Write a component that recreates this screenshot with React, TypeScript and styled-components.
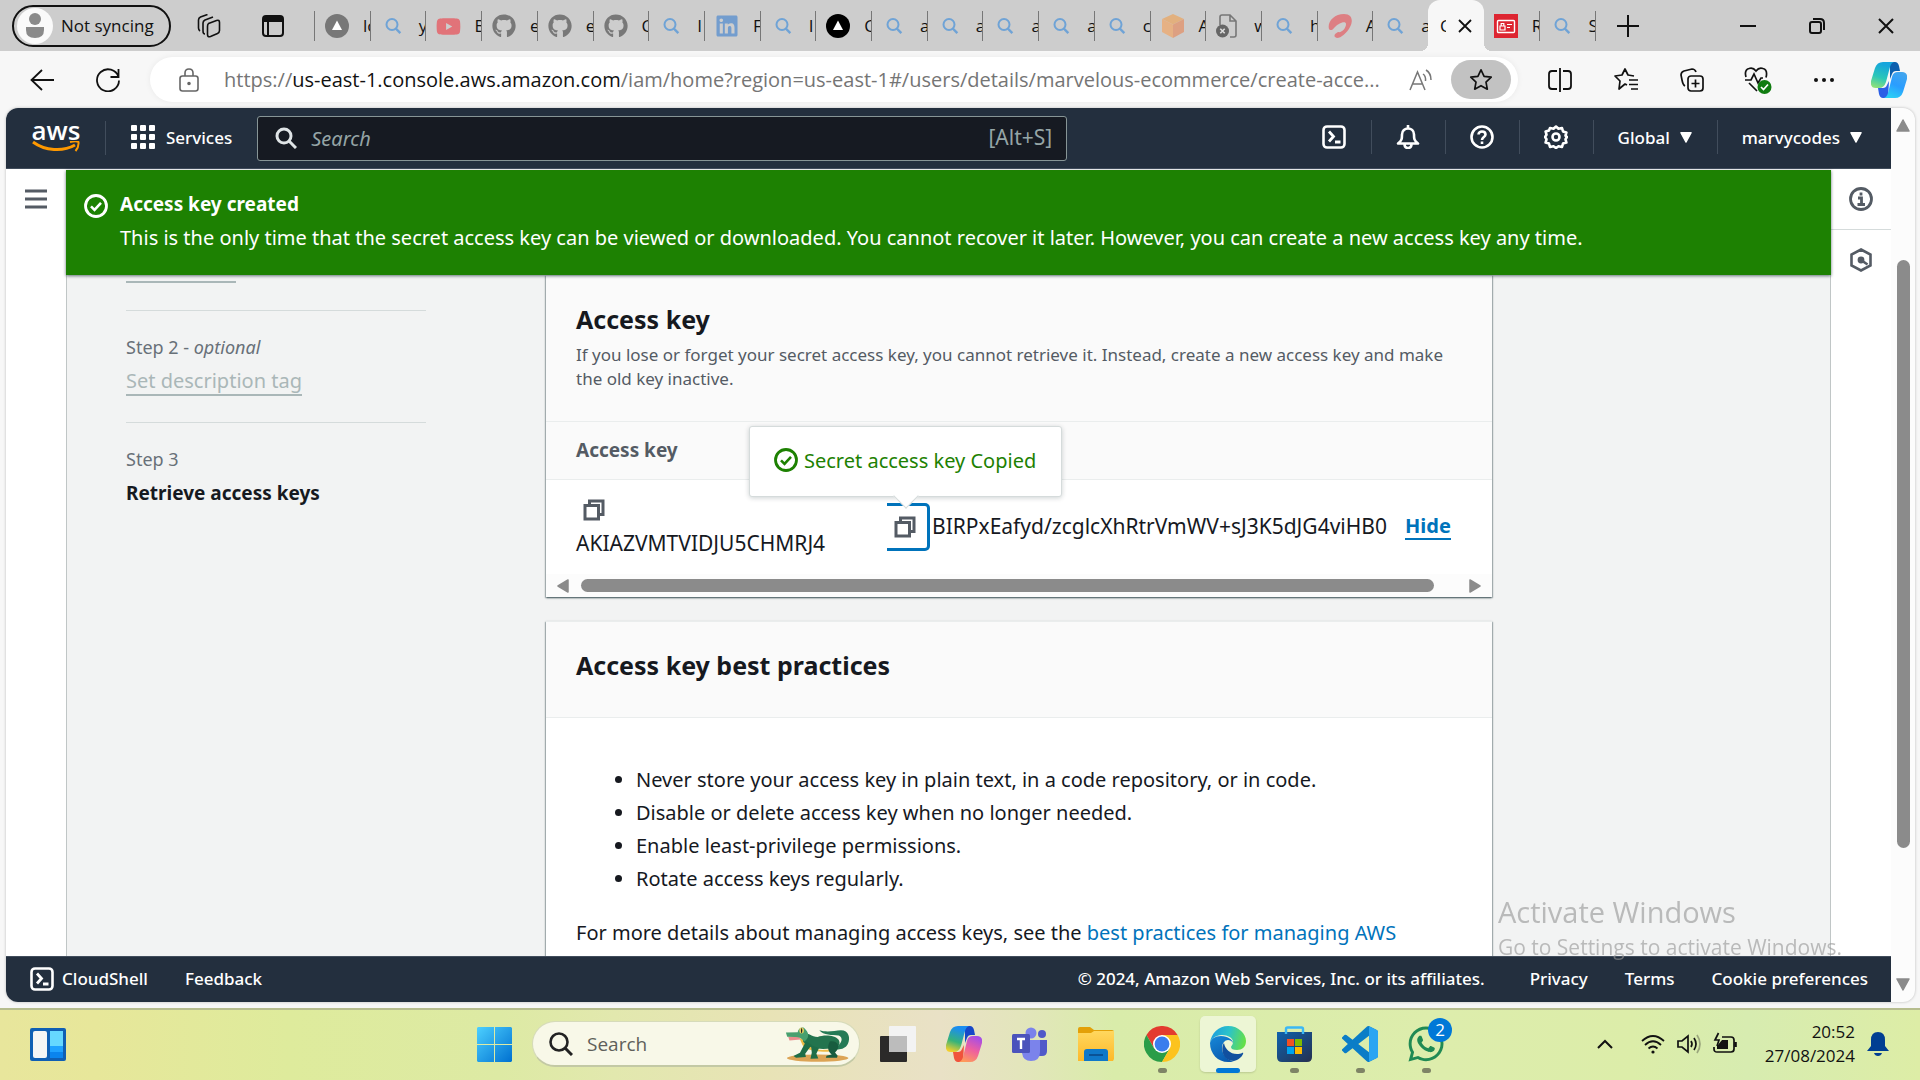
import React from 'react';
import styled, { createGlobalStyle, css } from 'styled-components';
import { FaGithub, FaYoutube, FaLinkedin, FaWhatsapp } from 'react-icons/fa';

const UI = '"Open Sans", "Noto Sans", sans-serif';
const EMBER = '"Noto Sans", "Open Sans", sans-serif';

const Global = createGlobalStyle`
  *, *::before, *::after { box-sizing: border-box; }
  body { margin: 0; background: #f7f7f7; }
  button { font: inherit; color: inherit; background: none; border: 0; padding: 0; cursor: pointer; }
  input { font: inherit; color: inherit; background: none; border: 0; padding: 0; outline: 0; min-width: 0; }
  h1, h2, p, ul, ol { margin: 0; padding: 0; }
  a { text-decoration: none; }
  svg { display: block; flex: none; }
`;

const Screen = styled.div`
  display: flex;
  flex-direction: column;
  height: 100vh;
  overflow: hidden;
  font-family: ${UI};
  color: #111;
`;

/* ---------- browser tab strip ---------- */

const TabStrip = styled.header`
  display: flex;
  align-items: center;
  height: 51px;
  background: #cdcdcd;
  font-size: 17px;
`;
const StripStart = styled.div`
  display: flex;
  align-items: center;
  width: 314px;
  padding-left: 12px;
`;
const Profile = styled.button`
  display: flex;
  align-items: center;
  gap: 8px;
  width: 159px;
  height: 42px;
  padding: 0 0 0 3px;
  border: 2px solid #111;
  border-radius: 21px;
  white-space: nowrap;
`;
const Avatar = styled.span`
  display: grid;
  place-items: center;
  width: 36px;
  height: 36px;
  border-radius: 50%;
  background: #fafafa;
`;
const StripIcon = styled.button`
  display: grid;
  place-items: center;
  width: 64px;
  height: 42px;
`;
const StripTools = styled.div`
  display: flex;
  margin-left: 6px;
`;
const Tabs = styled.nav`
  display: flex;
  flex: 1;
  min-width: 0;
  height: 100%;
`;
const Rule = styled.i`
  flex: none;
  align-self: center;
  width: 1px;
  height: 30px;
  background: #777;
`;
const TabItem = styled.button`
  display: flex;
  align-items: center;
  flex: 1 1 0;
  min-width: 0;
  height: 100%;
  text-align: left;
`;
const TabFace = styled.span`
  display: flex;
  align-items: center;
  gap: 14px;
  flex: 1;
  min-width: 0;
  padding-left: 10px;
  overflow: hidden;
  white-space: nowrap;
`;
const Favicon = styled.span<{ $dim?: boolean }>`
  display: grid;
  place-items: center;
  flex: none;
  width: 24px;
  height: 24px;
  opacity: ${p => (p.$dim ? 0.55 : 1)};
`;
const ActiveTab = styled(TabItem)`
  position: relative;
  justify-content: center;
  gap: 12px;
  background: #f7f7f7;
  border-radius: 12px 12px 0 0;
  &::before, &::after {
    content: '';
    position: absolute;
    bottom: 0;
    width: 8px;
    height: 8px;
  }
  &::before { right: 100%; background: radial-gradient(circle at 0 0, transparent 8px, #f7f7f7 8px); }
  &::after { left: 100%; background: radial-gradient(circle at 100% 0, transparent 8px, #f7f7f7 8px); }
`;
const ClippedTitle = styled.span`
  width: 6px;
  overflow: hidden;
`;
const StripEnd = styled.div`
  display: flex;
  justify-content: space-between;
  width: 324px;
`;
const WindowControls = styled.div`
  display: flex;
`;
const WindowButton = styled.button<{ $narrow?: boolean }>`
  display: grid;
  place-items: center;
  width: ${p => (p.$narrow ? 64 : 69)}px;
  height: 51px;
`;

/* ---------- browser toolbar ---------- */

const Toolbar = styled.div`
  display: flex;
  align-items: center;
  height: 57px;
  padding-left: 9px;
  background: #f7f7f7;
`;
const ToolButton = styled.button`
  display: grid;
  place-items: center;
  flex: none;
  width: 66px;
  height: 45px;
`;
const AddressBar = styled.div`
  display: flex;
  align-items: center;
  flex: 1;
  min-width: 0;
  height: 45px;
  margin: 0 9px;
  padding: 0 7px 0 27px;
  border-radius: 23px;
  background: #fff;
  box-shadow: 0 0 6px rgba(0, 0, 0, 0.06);
`;
const Url = styled.div`
  flex: 1;
  min-width: 0;
  margin-left: 23px;
  overflow: hidden;
  font-size: 20px;
  line-height: 28px;
  white-space: nowrap;
  color: #757575;
  strong { font-weight: 400; color: #111; }
`;
const StarButton = styled.button`
  display: grid;
  place-items: center;
  width: 60px;
  height: 39px;
  margin-left: 18px;
  border-radius: 20px;
  background: #c2c2c2;
`;
const ToolGroup = styled.div`
  display: flex;
  ${ToolButton}:last-child { width: 63px; }
`;

/* ---------- page frame ---------- */

const Frame = styled.div`
  display: flex;
  flex: 1;
  min-height: 0;
  margin: 0 5px 6px 6px;
  border-radius: 12px;
  overflow: hidden;
  background: #fcfcfc;
  box-shadow: 0 0 3px rgba(0, 0, 0, 0.25);
  font-family: ${EMBER};
`;
const Page = styled.div`
  display: flex;
  flex-direction: column;
  flex: 1;
  min-width: 0;
`;
const PageScroll = styled.div`
  display: flex;
  flex-direction: column;
  align-items: center;
  width: 24px;
  padding: 11px 0;
`;
const PageThumb = styled.div`
  width: 13px;
  margin: 127px 0 auto;
  flex: 0 1 588px;
  border-radius: 7px;
  background: #8b8b8b;
`;

const AwsBar = styled.header`
  display: flex;
  align-items: center;
  height: 61px;
  padding-left: 26px;
  background: #232f3e;
  border-bottom: 1px solid #414d5c;
  color: #fff;
  font-size: 17px;
  font-weight: 500;
`;
const Logo = styled.a`
  display: flex;
  flex-direction: column;
  align-items: center;
  width: 48px;
  padding-bottom: 3px;
  color: #fff;
  font: 600 26px/22px ${UI};
`;
const BarRule = styled.i`
  width: 1px;
  height: 34px;
  margin: 0 25px;
  background: #414d5c;
`;
const ServicesButton = styled.button`
  display: flex;
  align-items: center;
  gap: 11px;
  padding-bottom: 2px;
`;
const AwsSearch = styled.label`
  display: flex;
  align-items: center;
  flex: 0 1 810px;
  height: 45px;
  margin-left: 25px;
  padding: 0 14px 0 17px;
  border: 1px solid #879596;
  border-radius: 3px;
  background: #161a22;
  color: #95a5a6;
  font-size: 20px;
  font-weight: 400;
  input { flex: 1; margin-left: 14px; font-style: italic; }
  input::placeholder { color: #95a5a6; opacity: 1; }
`;
const Shortcut = styled.span`
  font-size: 21px;
  line-height: 28px;
  padding-bottom: 2px;
`;
const BarEnd = styled.div`
  display: flex;
  margin-left: auto;
  padding: 0 4px 2px 0;
`;
const BarItem = styled.button<{ $first?: boolean }>`
  display: flex;
  align-items: center;
  gap: 10px;
  height: 34px;
  padding: 0 25px 0 24px;
  border-left: 1px solid ${p => (p.$first ? 'transparent' : '#414d5c')};
`;
const Body = styled.div`
  display: flex;
  flex: 1;
  min-height: 0;
`;
const SideRail = styled.aside`
  display: flex;
  flex-direction: column;
  flex: none;
  width: 60px;
  background: #fff;
`;
const RailButton = styled.button<{ $ruled?: boolean }>`
  display: grid;
  place-items: center;
  height: 61px;
  border-bottom: 1px solid ${p => (p.$ruled ? '#d5dbdb' : 'transparent')};
`;
const Main = styled.main`
  display: flex;
  flex-direction: column;
  flex: 1;
  min-width: 0;
  padding-top: 1px;
  color: #16191f;
  font-size: 20px;
  line-height: 33px;
`;
const Flash = styled.section`
  position: relative;
  z-index: 1;
  display: flex;
  gap: 12px;
  padding: 18px 18px 21px;
  background: #1d8102;
  color: #fff;
  box-shadow: 0 1px 3px rgba(0, 28, 36, 0.6);
  svg { margin-top: 6px; }
`;
const FlashTitle = styled.h1`
  font-size: 19px;
  line-height: 33px;
  font-weight: 700;
`;
const Content = styled.div`
  display: grid;
  grid-template-columns: 300px minmax(0, 946px);
  align-items: start;
  column-gap: 120px;
  flex: 1;
  min-height: 0;
  padding-left: 59px;
  overflow: hidden;
  background: #f2f3f3;
  border: solid #c0c6c6;
  border-width: 0 1px;
`;
const Steps = styled.ol`
  list-style: none;
  margin-top: -20px;
`;
const Step = styled.li`
  display: flex;
  flex-direction: column;
  align-items: flex-start;
  gap: 9px;
  padding-bottom: 27px;
  & + & { padding-top: 24px; padding-bottom: 26px; border-top: 1px solid #d5dbdb; }
`;
const StepLabel = styled.span`
  font-size: 18px;
  line-height: 24px;
  color: #687078;
`;
const StepLink = styled.a`
  line-height: 26px;
  color: #aab7b8;
  border-bottom: 2px solid #aab7b8;
`;
const StepCurrent = styled.span`
  font-size: 19px;
  line-height: 26px;
  font-weight: 700;
`;
const Cards = styled.div`
  display: flex;
  flex-direction: column;
  gap: 24px;
`;
const Card = styled.section`
  border-top: 1px solid #eaeded;
  background: #fff;
  box-shadow: 0 1px 2px rgba(0, 28, 36, 0.5), 1px 1px 1px rgba(0, 28, 36, 0.2), -1px 1px 1px rgba(0, 28, 36, 0.2);
`;
const CardHeader = styled.div<{ $described?: boolean }>`
  padding: 25px 30px ${p => (p.$described ? 30 : 34)}px;
  background: #fafafa;
  border-bottom: 1px solid #eaeded;
`;
const CardTitle = styled.h2`
  font-size: 25px;
  line-height: 36px;
  font-weight: 700;
`;
const CardText = styled.p`
  margin-top: 6px;
  font-size: 17px;
  line-height: 24px;
  color: #545b64;
`;
const KeyTable = styled.table`
  width: 100%;
  border-collapse: collapse;
  table-layout: fixed;
  th {
    height: 57px;
    padding: 0 0 0 30px;
    background: #fafafa;
    border-bottom: 1px solid #eaeded;
    color: #545b64;
    font-size: 19px;
    text-align: left;
  }
  th:first-child { width: 341px; }
  td { height: 95px; padding: 0 0 0 30px; vertical-align: middle; }
  td + td { padding-left: 0; }
`;
const KeyCell = styled.div`
  display: flex;
  flex-direction: column;
  align-items: flex-start;
  font-size: 21px;
`;
const SecretCell = styled.div`
  display: flex;
  align-items: center;
  font-size: 21px;
`;
const CopyButton = styled.button<{ $focused?: boolean }>`
  display: flex;
  align-items: center;
  height: 33px;
  padding: 0 7px;
  ${p => p.$focused && css`
    width: 43px;
    height: 48px;
    border: solid #0073bb;
    border-width: 3px 3px 3px 0;
    border-radius: 0 5px 5px 0;
  `}
`;
const CopyAnchor = styled.span`
  position: relative;
  margin-right: 2px;
`;
const Popover = styled.span`
  position: absolute;
  bottom: calc(100% + 6px);
  left: -138px;
  z-index: 2;
  display: flex;
  align-items: center;
  gap: 6px;
  height: 71px;
  padding: 0 25px 2px 24px;
  border: 1px solid #d5dbdb;
  border-radius: 3px;
  background: #fff;
  box-shadow: 0 1px 5px rgba(0, 28, 36, 0.2);
  color: #1d8102;
  font-size: 20px;
  white-space: nowrap;
  &::after {
    content: '';
    position: absolute;
    top: 100%;
    left: 147px;
    width: 18px;
    height: 18px;
    margin-top: -9px;
    background: #fff;
    border: solid #d5dbdb;
    border-width: 0 1px 1px 0;
    transform: rotate(45deg);
  }
`;
const HideButton = styled.button`
  margin-left: 18px;
  font-size: 20px;
  line-height: 24px;
  font-weight: 700;
  color: #0073bb;
  border-bottom: 2px solid #0073bb;
`;
const TableScroll = styled.div`
  display: flex;
  align-items: center;
  gap: 10px;
  height: 23px;
  padding: 0 11px;
  background: #fcfcfc;
`;
const TableThumb = styled.div`
  flex: 1;
  height: 13px;
  margin-right: 23px;
  border-radius: 7px;
  background: #8b8b8b;
`;
const Practices = styled.div`
  padding: 45px 30px 24px;
  ul { padding-left: 60px; margin-bottom: 21px; }
  a { color: #0073bb; }
`;
const AwsFooter = styled.footer`
  display: flex;
  align-items: center;
  height: 46px;
  padding: 0 23px 2px 24px;
  gap: 37px;
  background: #232f3e;
  border-top: 1px solid #414d5c;
  color: #fff;
  font-size: 17px;
  font-weight: 500;
  a { color: #fff; }
`;
const ShellButton = styled.button`
  display: flex;
  align-items: center;
  gap: 8px;
`;
const Legal = styled.span`
  margin-left: auto;
  margin-right: 8px;
`;

/* ---------- windows watermark ---------- */

const Watermark = styled.div`
  position: fixed;
  right: 78px;
  bottom: 118px;
  z-index: 5;
  color: rgba(150, 150, 150, 0.62);
  font-size: 21px;
  line-height: 30px;
  pointer-events: none;
  strong { display: block; font-size: 29px; line-height: 40px; font-weight: 400; }
`;

/* ---------- taskbar ---------- */

const Taskbar = styled.footer`
  display: grid;
  grid-template-columns: 1fr auto 1fr;
  align-items: center;
  height: 72px;
  padding-bottom: 2px;
  border-top: 2px solid #b6bd8e;
  background: linear-gradient(90deg, #e8e69c 0, #e7e79a 5%, #deeb9c 15%, #ddeaa4 26%, #e2e8ae 32%, #e8e3b6 40%, #e9e1c6 49%, #e3e5bc 53%, #d9ecaa 58%, #ddedac 75%, #dceda9 85%, #d7ecb0 91%, #ddeda6 100%);
`;
const TaskStart = styled.button`
  justify-self: start;
  margin-left: 30px;
`;
const TaskIcons = styled.div`
  display: flex;
  align-items: center;
  gap: 10px;
`;
const TaskButton = styled.button<{ $active?: boolean }>`
  position: relative;
  display: grid;
  place-items: center;
  width: 56px;
  height: 56px;
  border-radius: 5px;
  ${p => p.$active && css`
    background: rgba(255, 255, 255, 0.5);
    box-shadow: 0 1px 2px rgba(0, 0, 0, 0.15);
  `}
`;
const Running = styled.i<{ $active?: boolean }>`
  position: absolute;
  bottom: -1px;
  left: 50%;
  width: ${p => (p.$active ? 24 : 9)}px;
  height: 5px;
  margin-left: ${p => (p.$active ? -12 : -4)}px;
  border-radius: 3px;
  background: ${p => (p.$active ? '#0078d7' : '#7e8466')};
`;
const Badge = styled.span`
  position: absolute;
  top: 2px;
  right: 2px;
  width: 24px;
  height: 24px;
  border-radius: 50%;
  background: #0078d7;
  color: #fff;
  font-size: 17px;
  line-height: 23px;
  text-align: center;
`;
const TaskSearch = styled.label`
  display: flex;
  align-items: center;
  width: 328px;
  height: 46px;
  padding: 0 8px 0 16px;
  border: 1px solid rgba(180, 190, 140, 0.5);
  border-bottom: 2px solid rgba(160, 170, 120, 0.6);
  border-radius: 23px;
  background: #f8f8e8;
  font-size: 19px;
  input { flex: 1; margin-left: 14px; }
  input::placeholder { color: #5f5f5a; opacity: 1; }
`;
const Tray = styled.div`
  display: flex;
  align-items: center;
  justify-self: end;
  padding-right: 31px;
`;
const TrayButton = styled.button<{ $gap?: number }>`
  display: flex;
  align-items: center;
  gap: 12px;
  margin-right: ${p => p.$gap ?? 0}px;
`;
const Clock = styled.time`
  margin-right: 12px;
  font-size: 17px;
  line-height: 24px;
  text-align: right;
`;

/* ---------- drawings ---------- */

const Line = ({ s = 24, w = 2, c = 'currentColor', vb = 24, children }: { s?: number; w?: number; c?: string; vb?: number; children: React.ReactNode }) => (
  <svg width={s} height={s} viewBox={`0 0 ${vb} ${vb}`} fill="none" stroke={c} strokeWidth={w} aria-hidden="true">{children}</svg>
);
const BlueSearch = () => (
  <Line s={18} w={2} c="#6fa3d6" vb={18}><circle cx="8" cy="7.5" r="5.5" /><path d="M11.8 11.5l4.5 4.7" strokeWidth="2.4" /></Line>
);
const Triangle = ({ bg }: { bg: string }) => (
  <svg width="24" height="24" viewBox="0 0 24 24"><circle cx="12" cy="12" r="12" fill={bg} /><path d="M12 6.5l5 9.5H7z" fill="#fff" /></svg>
);
const Cube = () => (
  <svg width="24" height="24" viewBox="0 0 24 24"><path d="M12 0l11 5-11 5.5L1 5z" fill="#e2b07e" /><path d="M1 5l11 5.5V24L1 18z" fill="#e6b184" /><path d="M23 5l-11 5.5V24l11-6z" fill="#dda082" /></svg>
);
const DocX = () => (
  <svg width="24" height="24" viewBox="0 0 24 24" fill="none" stroke="#777" strokeWidth="1.6"><path d="M4 11V3q0-2 2-2h8l6 6v14q0 2-2 2h-4M14 1v6h6" /><circle cx="6.5" cy="17" r="6.5" fill="#666" stroke="none" /><path d="M4.300 14.800l4.400 4.400m0-4.400l-4.400 4.400" stroke="#ddd" /></svg>
);
const Airtel = () => (
  <svg width="24" height="24" viewBox="0 0 24 24"><path d="M1 15C-1 8 6 0 16 0c9 0 9 8 6 13-3 6-9 11-13 11-4-1-3-4 1-6 4 1 8-4 8-8 0-4-8-1-12 4-1 2-4 3-5 1z" fill="#dd7f83" /></svg>
);
const IamBadge = () => (
  <svg width="24" height="24" viewBox="0 0 24 24"><rect width="24" height="24" fill="#dd2531" /><rect x="3.5" y="6.5" width="17" height="12" rx="1" fill="none" stroke="#fff" strokeWidth="1.4" /><path d="M6 12h5v4H6zM7.200 12V9.500h2.600V12M13 10.500h5M13 13.500h3" fill="none" stroke="#fff" strokeWidth="1.2" /></svg>
);
const Star = 'M12 1.800l3.100 6.500 7.100.9-5.200 4.900 1.300 7.100L12 17.700l-6.300 3.500L7 14.100 1.800 9.200l7.100-.9z';
const CheckCircle = ({ s = 24 }: { s?: number }) => (
  <Line s={s} w={2.8}><circle cx="12" cy="12" r="10.5" /><path d="M7 12.300l3.500 3.500 6.500-7" strokeWidth="2.6" /></Line>
);
const CopyIcon = () => (
  <Line s={22} w={3} c="#545b64" vb={22}><path d="M2 6.500h13.500V20H2z" /><path d="M6.500 6V2H20v13.500h-4" /></Line>
);
const Shell = () => (
  <Line><rect x="1.5" y="1.5" width="21" height="21" rx="3.5" strokeWidth="2.6" /><path d="M7 6.500l4.500 5L7 16.500M13 17h5.500" strokeWidth="2.8" /></Line>
);
const Caret = ({ dir, s = 14, c = '#8b8b8b' }: { dir: 'up' | 'down' | 'left' | 'right'; s?: number; c?: string }) => {
  const d = { up: 'M7 1l6 11H1z', down: 'M1 2h12L7 13z', left: 'M1 7l10-6v12z', right: 'M13 7L3 1v12z' }[dir];
  return <svg width={s} height={s} viewBox="0 0 14 14" fill={c} stroke={c} strokeWidth="1.5" strokeLinejoin="round"><path d={d} /></svg>;
};

const Crocodile = () => (
  <svg width="66" height="38" viewBox="50 50 198 116">
    <ellipse cx="148" cy="151" rx="94" ry="11" fill="#dca455" />
    <path d="M153 66c22 7 45 2 66 0 24 0 30 24 21 42-8 16-28 20-46 14 22-6 38-32 18-40-20-2-46 0-59-16z" fill="#257a55" />
    <path d="M92 90c16 0 24 36 70 36 20 0 40-4 48-12l-20 16c-30 4-70 2-88-18z" fill="#eebb45" />
    <path d="M98 72c20 0 32 14 50 15 20-8 52-6 64 8 8 14-2 26-20 26-30 4-70 4-88-20z" fill="#23744e" />
    <path d="M185 100c24-4 36 16 16 34l8 10-2 6h-34l2-6 16-4c-10-8-16-22-6-40z" fill="#185c3f" />
    <path d="M112 100l18 10-20 28 2 10-30 2-8-5 20-10zM128 112l24 8-8 18 6 14-24 1 4-18z" fill="#1f6e48" />
    <path d="M58 86l32-2 6 10-34 3z" fill="#e98e8e" />
    <path d="M51 73l36-1c2-14 18-20 24-8 14 14 8 30-4 36-8-10-18-14-30-13l-22-1z" fill="#48a06f" />
    <ellipse cx="99" cy="67" rx="7" ry="9" fill="#e8d060" /><ellipse cx="99" cy="67" rx="2" ry="8" fill="#222" />
  </svg>
);
const WidgetsIcon = () => (
  <svg width="36" height="33" viewBox="0 0 36 33"><rect width="36" height="33" rx="2" fill="#0f5fb4" /><rect x="3" y="3" width="14" height="27" rx="2" fill="#f5f5f5" /><path d="M20 3h13v15H20z" fill="#66d8ff" /><path d="M20 18h13v6H20z" fill="#1fa2ff" /><path d="M20 24h13v6H20z" fill="#0a84ee" /></svg>
);
const WindowsIcon = () => (
  <svg width="35" height="35" viewBox="0 0 35 35">
    <defs><linearGradient id="win" gradientUnits="userSpaceOnUse" x1="0" y1="0" x2="35" y2="35"><stop offset="0" stopColor="#4cd0ff" /><stop offset="1" stopColor="#0070d0" /></linearGradient></defs>
    <path d="M1 0h16v17H0V1zM18 0h16l1 1v16H18zM0 18h17v17H1l-1-1zM18 18h17v16l-1 1H18z" fill="url(#win)" />
  </svg>
);
const TaskViewIcon = () => (
  <svg width="36" height="36" viewBox="0 0 36 36"><rect y="10" width="27" height="26" rx="1" fill="#2b2a29" /><rect x="9" width="27" height="26" rx="1" fill="#f3f3f3" /><path d="M9 10h18v16H9z" fill="#bcbcbc" /></svg>
);
const CopilotIcon = ({ id, colors }: { id: string; colors: string[] }) => (
  <svg width="36" height="36" viewBox="0 0 36 36">
    <defs>
      <linearGradient id={`${id}a`} x1=".6" y1="0" x2=".3" y2="1"><stop offset=".1" stopColor={colors[0]} /><stop offset=".6" stopColor={colors[1]} /><stop offset="1" stopColor={colors[2]} /></linearGradient>
      <linearGradient id={`${id}b`} x1=".7" y1="0" x2=".3" y2="1"><stop offset="0" stopColor={colors[3]} /><stop offset=".5" stopColor={colors[4]} /><stop offset="1" stopColor={colors[5]} /></linearGradient>
    </defs>
    <path d="M19 0h5q3 0 4 4l1 5h-4q-3 0-4 3l-2 5z" fill={colors[6]} />
    <path d="M12 0h11q-3 1-4 5l-4 15q-2 6-7 6H5q-6 0-5-7L4 6q2-6 8-6z" fill={`url(#${id}a)`} />
    <path d="M17 36h-5q-3 0-4-4l-1-6h5q3 0 4-3l2-4z" fill={colors[7]} />
    <path d="M24 36H13q3-1 4-5l4-16q1-5 6-5h4q6 0 5 7l-4 13q-2 6-8 6z" fill={`url(#${id}b)`} />
  </svg>
);
const TeamsIcon = () => (
  <svg width="36" height="34" viewBox="0 0 36 34">
    <circle cx="30" cy="7" r="4" fill="#5059c9" /><path d="M25 13h10v11q0 5-5 5h-5z" fill="#5059c9" />
    <circle cx="19" cy="6" r="5.5" fill="#7b83eb" /><path d="M10 13h18v12q0 9-9 9-8 0-9-8z" fill="#7b83eb" />
    <rect y="7" width="18" height="19" rx="1.5" fill="#4b53bc" /><path d="M5 12h8M9 12v10" stroke="#fff" strokeWidth="2.4" />
  </svg>
);
const FolderIcon = () => (
  <svg width="36" height="34" viewBox="0 0 36 34">
    <defs><linearGradient id="folder" x1="0" y1="0" x2="0" y2="1"><stop offset="0" stopColor="#ffd75e" /><stop offset="1" stopColor="#fdb92a" /></linearGradient></defs>
    <path d="M0 2q0-2 2-2h10l4 3h18q2 0 2 2v8H0z" fill="#e3a008" /><path d="M0 6h13l3-2h20v28l-1 2H0z" fill="url(#folder)" />
    <path d="M6 34v-9q0-3 3-3h18q3 0 3 3v9z" fill="#0f78c9" /><path d="M11 28h14" stroke="#0a4a8a" strokeWidth="1.6" />
  </svg>
);
const ChromeIcon = () => (
  <svg width="36" height="36" viewBox="0 0 36 36">
    <path d="M2.400 9A18 18 0 0 1 33.600 9H18L10.200 22.500z" fill="#e33b2e" />
    <path d="M2.400 9A18 18 0 0 0 18 36l7.800-13.500H10.200z" fill="#2a9d48" />
    <path d="M33.600 9A18 18 0 0 1 18 36l7.800-13.500L18 9z" fill="#fcc31e" />
    <circle cx="18" cy="18" r="9" fill="#fff" /><circle cx="18" cy="18" r="7.4" fill="#3b7ded" />
  </svg>
);
const EdgeIcon = () => (
  <svg width="36" height="36" viewBox="0 0 36 36">
    <defs>
      <linearGradient id="edgeTop" x1="0" y1=".3" x2="1" y2=".5"><stop offset="0" stopColor="#1c9de0" /><stop offset=".5" stopColor="#2cc3c9" /><stop offset="1" stopColor="#66e046" /></linearGradient>
      <linearGradient id="edgeLow" x1="0" y1="0" x2=".5" y2="1"><stop offset="0" stopColor="#1788d8" /><stop offset="1" stopColor="#0a5cb0" /></linearGradient>
    </defs>
    <path d="M0 17C1 7 9 0 18 0c11 0 18 8 18 15 0 6-4 9-9 9-4 0-6-1-6-3 0-1 2-2 2-5 0-4-5-7-11-7C6 9 1 13 0 17z" fill="url(#edgeTop)" />
    <path d="M0 17c1-4 5-7 11-7 7 0 12 4 12 7-1-2-3-3-5-3-3 0-6 3-6 8 0 6 5 13 12 13-2 1-4 1-6 1C8 36 0 28 0 17z" fill="url(#edgeLow)" />
    <path d="M14 17c-3 3-3 18 10 18 4-1 8-4 9-7 .5-1 0-1.500-1-1-1 .6-3 1-5 1-7 0-12-5-13-11z" fill="#11509f" />
  </svg>
);
const StoreIcon = () => (
  <svg width="35" height="36" viewBox="0 0 35 36">
    <defs><linearGradient id="store" x1="0" y1="0" x2="1" y2="1"><stop offset="0" stopColor="#0f62ad" /><stop offset="1" stopColor="#26304f" /></linearGradient></defs>
    <path d="M0 6h35v25q0 5-5 5H5q-5 0-5-5z" fill="url(#store)" />
    <path d="M9 8V3q0-1.500 1.500-1.500h14Q26 1.500 26 3v5" fill="none" stroke="#3bb8f5" strokeWidth="2.4" />
    <path d="M10 13h7v7h-7z" fill="#f25022" /><path d="M18 13h7v7h-7z" fill="#7fba00" /><path d="M10 21h7v7h-7z" fill="#00a4ef" /><path d="M18 21h7v7h-7z" fill="#ffb900" />
  </svg>
);
const CodeIcon = () => (
  <svg width="36" height="36" viewBox="0 0 24 24">
    <path d="M23.150 2.587L18.210.21a1.494 1.494 0 0 0-1.705.29l-9.460 8.630-4.120-3.128a.999.999 0 0 0-1.276.057L.327 7.261A1 1 0 0 0 .326 8.740L3.899 12 .326 15.260a1 1 0 0 0 .001 1.479L1.650 17.940a.999.999 0 0 0 1.276.057l4.120-3.128 9.460 8.630a1.492 1.492 0 0 0 1.704.290l4.942-2.377A1.500 1.500 0 0 0 24 20.060V3.939a1.500 1.500 0 0 0-.850-1.352zm-5.146 14.861L10.826 12l7.178-5.448v10.896z" fill="#0a7dc7" />
    <path d="M18 .2l5.150 2.387q.85.5.85 1.352V20.060q0 .9-.85 1.352L18 23.800z" fill="#2aa5f2" />
  </svg>
);

/* ---------- data ---------- */

type TabData = { icon: React.ReactNode; title: string; dim?: boolean };
const search = (title: string): TabData => ({ icon: <BlueSearch />, title });
const github = (title: string): TabData => ({ icon: <FaGithub size={24} color="#333" />, title, dim: true });

const tabsBefore: TabData[] = [
  { icon: <Triangle bg="#777" />, title: 'lo' },
  search('y'),
  { icon: <FaYoutube size={25} color="#f22b35" />, title: 'B', dim: true },
  github('e'), github('e'), github('C'),
  search('I'),
  { icon: <FaLinkedin size={24} color="#2a77d0" />, title: 'F', dim: true },
  search('I'),
  { icon: <Triangle bg="#000" />, title: 'C' },
  search('a'), search('a'), search('a'), search('a'), search('c'),
  { icon: <Cube />, title: 'A' },
  { icon: <DocX />, title: 'w' },
  search('h'),
  { icon: <Airtel />, title: 'A' },
  search('a'),
];
const tabsAfter: TabData[] = [{ icon: <IamBadge />, title: 'R' }, search('S')];

const practices = [
  'Never store your access key in plain text, in a code repository, or in code.',
  'Disable or delete access key when no longer needed.',
  'Enable least-privilege permissions.',
  'Rotate access keys regularly.',
];

const Tab = ({ tab, ruled = true }: { tab: TabData; ruled?: boolean }) => (
  <TabItem>
    {ruled && <Rule />}
    <TabFace><Favicon $dim={tab.dim}>{tab.icon}</Favicon>{tab.title}</TabFace>
  </TabItem>
);

function BrowserTabs() {
  return (
    <TabStrip>
      <StripStart>
        <Profile>
          <Avatar><svg width="20" height="26" viewBox="0 0 20 26" fill="#8a8a8a"><circle cx="10" cy="6" r="6" /><path d="M1 14h18v3q0 8-9 8t-9-8z" /></svg></Avatar>
          Not syncing
        </Profile>
        <StripTools>
          <StripIcon aria-label="Workspaces">
            <Line w={1.600}><path d="M11.500 9.500l8-3q3-1 3 2v8q0 2-2 3l-7 3q-3 1-3-2v-8q0-2 1-3z" /><path d="M8 20q-2 0-2-3V9q0-2 2-3l8-3M3 17q-1.500-1-1.500-3V6q0-2 2-3l7-2.500" /></Line>
          </StripIcon>
          <StripIcon aria-label="Tab actions">
            <Line s={24} w={2}><rect x="2" y="2" width="20" height="20" rx="3" /><path d="M2 5h20" strokeWidth="6" /><path d="M7 8v14" /></Line>
          </StripIcon>
        </StripTools>
      </StripStart>
      <Tabs>
        {tabsBefore.map((tab, i) => <Tab key={i} tab={tab} />)}
        <ActiveTab>
          <ClippedTitle>C</ClippedTitle>
          <Line s={14} w={1.800} vb={14}><path d="M1 1l12 12M13 1L1 13" /></Line>
        </ActiveTab>
        {tabsAfter.map((tab, i) => <Tab key={i} tab={tab} ruled={i > 0} />)}
        <Rule />
      </Tabs>
      <StripEnd>
        <WindowButton $narrow aria-label="New tab"><Line s={22} w={2} vb={22}><path d="M11 0v22M0 11h22" /></Line></WindowButton>
        <WindowControls>
          <WindowButton aria-label="Minimize"><Line s={16} w={2} vb={16}><path d="M0 8h16" /></Line></WindowButton>
          <WindowButton aria-label="Restore"><Line s={16} w={2} vb={16}><rect x="1" y="4" width="11" height="11" rx="2" /><path d="M4 1h7q4 0 4 4v7" /></Line></WindowButton>
          <WindowButton aria-label="Close"><Line s={16} w={2} vb={16}><path d="M1 1l14 14M15 1L1 15" /></Line></WindowButton>
        </WindowControls>
      </StripEnd>
    </TabStrip>
  );
}

function BrowserToolbar() {
  return (
    <Toolbar>
      <ToolButton aria-label="Back"><Line w={1.800}><path d="M24 12H1M12 2L1.500 12 12 22" /></Line></ToolButton>
      <ToolButton aria-label="Refresh"><Line w={1.800}><path d="M22.500 9A11 11 0 1 0 23 12.500M22.500 1v8h-8" /></Line></ToolButton>
      <AddressBar>
        <Line s={24} w={1.600} c="#666"><rect x="3" y="8" width="18" height="15" rx="2.5" /><path d="M8 8V5q0-4 4-4t4 4v3" /><circle cx="12" cy="15.5" r="1" fill="#666" /></Line>
        <Url>https://<strong>us-east-1.console.aws.amazon.com</strong>/iam/home?region=us-east-1#/users/details/marvelous-ecommerce/create-acce...</Url>
        <Line s={24} w={1.500} c="#777"><path d="M1 22L8.500 4 16 22M4 16h9M14 6q3 2 2.500 7M17 2q5 3 5 10" /></Line>
        <StarButton aria-label="Favorite"><Line w={1.700}><path d={Star} strokeLinejoin="round" /></Line></StarButton>
      </AddressBar>
      <ToolGroup>
        <ToolButton aria-label="Split screen"><Line w={1.800}><path d="M9 3H4Q1 3 1 6v12q0 3 3 3h5M15 3h5q3 0 3 3v12q0 3-3 3h-5M12 0v24" /></Line></ToolButton>
        <ToolButton aria-label="Favorites"><Line w={1.700}><path d="M13 17l-2-1-6 5 1-8-5-5 7-1 3-6 3 6 6 1M15 12h9M15 16.500h9M17 21h7" strokeLinejoin="round" /></Line></ToolButton>
        <ToolButton aria-label="Collections"><Line w={1.700}><rect x="8" y="8" width="15" height="15" rx="3" /><path d="M15.500 11.500v8M11.500 15.500h8M5 18Q3 17 2 12L1 7q0-3 3-4l8-2q3 0 4 3" /></Line></ToolButton>
        <ToolButton aria-label="Browser essentials"><Line s={28} w={1.700} vb={28}><path d="M2 11Q0 4 5 2.500 9 1 12 5q3-4 7-2.500 5 1.500 3 9M1 14h6l3-6 4 9 3-5h2M5 17l8 8" /><circle cx="20.5" cy="21" r="7" fill="#107c10" stroke="none" /><path d="M17 21l2.500 2.500 4.500-5" stroke="#fff" /></Line></ToolButton>
        <ToolButton aria-label="More"><svg width="22" height="6" fill="#111"><circle cx="3" cy="3" r="2" /><circle cx="11" cy="3" r="2" /><circle cx="19" cy="3" r="2" /></svg></ToolButton>
        <ToolButton aria-label="Copilot"><CopilotIcon id="bar" colors={['#16a5dc', '#2bc7b8', '#8de07a', '#42a5ee', '#2a9dff', '#2ad0f5', '#0c5fae', '#2b5fe6']} /></ToolButton>
      </ToolGroup>
    </Toolbar>
  );
}

function AwsHeader() {
  return (
    <AwsBar>
      <Logo href="#home">
        aws
        <svg width="48" height="13" viewBox="0 0 48 13"><path d="M1 1c12 9 30 10 42 3" fill="none" stroke="#ff9900" strokeWidth="3" /><path d="M38 1q6-1.500 8.500 0 .5 5-3 9" fill="none" stroke="#ff9900" strokeWidth="2" /></svg>
      </Logo>
      <BarRule />
      <ServicesButton>
        <svg width="24" height="24" viewBox="0 0 24 24" fill="#fff">
          {[0, 9, 18].map(y => [0, 9, 18].map(x => <rect key={`${x}-${y}`} x={x} y={y} width="6" height="6" rx="1" />))}
        </svg>
        Services
      </ServicesButton>
      <AwsSearch>
        <Line s={22} w={3} c="#dfe4e6" vb={22}><circle cx="9" cy="9" r="7" /><path d="M14 14l7 7" /></Line>
        <input type="search" placeholder="Search" aria-label="Search services" />
        <Shortcut>[Alt+S]</Shortcut>
      </AwsSearch>
      <BarEnd>
        <BarItem $first aria-label="CloudShell"><Shell /></BarItem>
        <BarItem aria-label="Notifications"><Line w={2.600}><path d="M2 18.500c4-3 4-5 4-9 0-4 3-6 6-6s6 2 6 6c0 4 0 6 4 9zM12 0v4M8.500 19q0 4 3.500 4t3.500-4" strokeLinejoin="round" /></Line></BarItem>
        <BarItem aria-label="Support"><Line w={2.600}><circle cx="12" cy="12" r="10.5" /><path d="M8.500 9.500c0-4 7-4 7 0 0 2.500-3.500 2.500-3.500 5.500M12 16.500v2.500" /></Line></BarItem>
        <BarItem aria-label="Settings"><Line w={2.600}><path d="M12 1.500l2.500 2.300 3.500-.8 1 3.400 3.400 1-.9 3.300L23 12l-1.500 2.300.9 3.300-3.400 1-1 3.400-3.500-.8L12 23l-2.500-1.800-3.500.8-1-3.400-3.400-1 .9-3.300L1 12l1.500-2.300-.9-3.300 3.400-1L6 3l3.500.8z" strokeLinejoin="round" /><circle cx="12" cy="12" r="3.5" /></Line></BarItem>
        <BarItem>Global <Caret dir="down" c="#fff" s={12} /></BarItem>
        <BarItem>marvycodes <Caret dir="down" c="#fff" s={12} /></BarItem>
      </BarEnd>
    </AwsBar>
  );
}

function AccessKeyCard() {
  return (
    <Card>
      <CardHeader $described>
        <CardTitle>Access key</CardTitle>
        <CardText>If you lose or forget your secret access key, you cannot retrieve it. Instead, create a new access key and make the old key inactive.</CardText>
      </CardHeader>
      <KeyTable>
        <thead><tr><th scope="col">Access key</th><th scope="col" aria-label="Secret access key" /></tr></thead>
        <tbody>
          <tr>
            <td><KeyCell><CopyButton aria-label="Copy access key"><CopyIcon /></CopyButton>AKIAZVMTVIDJU5CHMRJ4</KeyCell></td>
            <td>
              <SecretCell>
                <CopyAnchor>
                  <CopyButton $focused aria-label="Copy secret access key"><CopyIcon /></CopyButton>
                  <Popover role="status"><CheckCircle />Secret access key Copied</Popover>
                </CopyAnchor>
                BIRPxEafyd/zcglcXhRtrVmWV+sJ3K5dJG4viHB0
                <HideButton>Hide</HideButton>
              </SecretCell>
            </td>
          </tr>
        </tbody>
      </KeyTable>
      <TableScroll><Caret dir="left" /><TableThumb /><Caret dir="right" /></TableScroll>
    </Card>
  );
}

function AwsPage() {
  return (
    <Page>
      <AwsHeader />
      <Body>
        <SideRail><RailButton aria-label="Open navigation"><Line s={22} w={3} c="#545b64" vb={22}><path d="M0 3h22M0 11h22M0 19h22" /></Line></RailButton></SideRail>
        <Main>
          <Flash>
            <CheckCircle />
            <div>
              <FlashTitle>Access key created</FlashTitle>
              <p>This is the only time that the secret access key can be viewed or downloaded. You cannot recover it later. However, you can create a new access key any time.</p>
            </div>
          </Flash>
          <Content>
            <Steps>
              <Step><StepLink href="#step1">alternatives</StepLink></Step>
              <Step><StepLabel>Step 2 - <em>optional</em></StepLabel><StepLink href="#step2">Set description tag</StepLink></Step>
              <Step><StepLabel>Step 3</StepLabel><StepCurrent>Retrieve access keys</StepCurrent></Step>
            </Steps>
            <Cards>
              <AccessKeyCard />
              <Card>
                <CardHeader><CardTitle>Access key best practices</CardTitle></CardHeader>
                <Practices>
                  <ul>{practices.map(t => <li key={t}>{t}</li>)}</ul>
                  <p>For more details about managing access keys, see the <a href="#practices">best practices for managing AWS</a></p>
                </Practices>
              </Card>
            </Cards>
          </Content>
        </Main>
        <SideRail>
          <RailButton $ruled aria-label="Info"><Line w={2.800} c="#545b64"><circle cx="12" cy="12" r="10.5" /><path d="M9 11h3.500v6M8.500 17.500h7.500M12 5.500v3" /></Line></RailButton>
          <RailButton aria-label="Diagnostics"><Line w={2.600} c="#545b64"><path d="M12 1.500l9.500 5v11l-9.500 5-9.500-5v-11z" /><circle cx="12" cy="12" r="3.4" fill="#545b64" stroke="none" /><path d="M12 12l6.500 4.500" /></Line></RailButton>
        </SideRail>
      </Body>
      <AwsFooter>
        <ShellButton><Shell />CloudShell</ShellButton>
        <a href="#feedback">Feedback</a>
        <Legal>© 2024, Amazon Web Services, Inc. or its affiliates.</Legal>
        <a href="#privacy">Privacy</a>
        <a href="#terms">Terms</a>
        <a href="#cookies">Cookie preferences</a>
      </AwsFooter>
    </Page>
  );
}

function WindowsTaskbar() {
  return (
    <Taskbar>
      <TaskStart aria-label="Widgets"><WidgetsIcon /></TaskStart>
      <TaskIcons>
        <TaskButton aria-label="Start"><WindowsIcon /></TaskButton>
        <TaskSearch>
          <Line s={24} w={2.600} c="#222"><circle cx="10" cy="10" r="8.5" /><path d="M16 16l7 7" strokeWidth="3" /></Line>
          <input type="search" placeholder="Search" aria-label="Search Windows" />
          <Crocodile />
        </TaskSearch>
        <TaskButton aria-label="Task view"><TaskViewIcon /></TaskButton>
        <TaskButton aria-label="Copilot"><CopilotIcon id="task" colors={['#1b8df0', '#36b37a', '#f5cf2a', '#a44de8', '#ee5fa0', '#ff9a5a', '#1747c8', '#f0533c']} /></TaskButton>
        <TaskButton aria-label="Teams"><TeamsIcon /></TaskButton>
        <TaskButton aria-label="File Explorer"><FolderIcon /></TaskButton>
        <TaskButton aria-label="Chrome"><ChromeIcon /><Running /></TaskButton>
        <TaskButton $active aria-label="Edge"><EdgeIcon /><Running $active /></TaskButton>
        <TaskButton aria-label="Microsoft Store"><StoreIcon /><Running /></TaskButton>
        <TaskButton aria-label="Visual Studio Code"><CodeIcon /><Running /></TaskButton>
        <TaskButton aria-label="WhatsApp"><FaWhatsapp size={40} color="#1f8a54" /><Running /><Badge>2</Badge></TaskButton>
      </TaskIcons>
      <Tray>
        <TrayButton $gap={28} aria-label="Hidden icons"><Line s={16} w={2} vb={16}><path d="M1 12l7-7 7 7" /></Line></TrayButton>
        <TrayButton $gap={28} aria-label="Network, sound and battery">
          <Line w={1.800}><path d="M1 9q11-10 22 0M4 13q8-7.500 16 0M7.500 16.500q4.500-4 9 0" /><circle cx="12" cy="20" r="1.6" fill="currentColor" stroke="none" /></Line>
          <Line w={1.700}><path d="M1 9h4l6-5v16l-6-5H1zM14 9q2 3 0 6M17 6q4 6 0 12" /><path d="M20 3q6 9 0 18" stroke="#9aa67c" /></Line>
          <Line w={1.700}><path d="M9 5h9q3 0 3 3v9q0 3-3 3H4q-3 0-3-3v-2" /><path d="M9 8h6v9H4v-3z" fill="currentColor" stroke="none" /><path d="M22.500 10v5" strokeWidth="2.6" /><path d="M5.500 1L2 8h4l-2 6" /></Line>
        </TrayButton>
        <Clock>20:52<br />27/08/2024</Clock>
        <TrayButton aria-label="Notifications"><svg width="22" height="24" viewBox="0 0 22 24" fill="#003e92"><path d="M11 0q7 0 7 8v6l4 5H0l4-5V8q0-8 7-8zM7 21h8q-1 3-4 3t-4-3z" /></svg></TrayButton>
      </Tray>
    </Taskbar>
  );
}

export default function App() {
  return (
    <Screen>
      <Global />
      <BrowserTabs />
      <BrowserToolbar />
      <Frame>
        <AwsPage />
        <PageScroll><Caret dir="up" /><PageThumb /><Caret dir="down" /></PageScroll>
      </Frame>
      <WindowsTaskbar />
      <Watermark><strong>Activate Windows</strong>Go to Settings to activate Windows.</Watermark>
    </Screen>
  );
}
